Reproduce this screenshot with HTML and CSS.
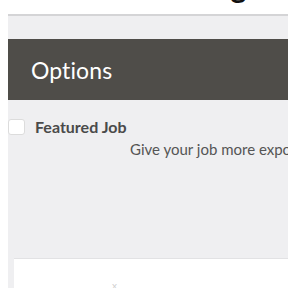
FILE: index.html
```html
<!DOCTYPE html>
<html>
<head>
<meta charset="utf-8">
<link rel="stylesheet" href="styles.css">
</head>
<body>
<div class="topbar"><span class="title">Listing</span></div>
<div class="page">
  <div class="band"><h2 class="band-title">Options</h2></div>
  <div class="options">
    <label class="row">
      <span class="checkbox"></span>
      <span class="label">Featured Job</span>
    </label>
    <p class="desc">Give your job more exposure by featuring it at the top of the listings.</p>
  </div>
  <div class="card"><span class="mark">x</span></div>
</div>
</body>
</html>
```
FILE: styles.css
```css
html, body {
  margin: 0;
  padding: 0;
  background: #ffffff;
  font-family: "Lato", "Noto Sans", sans-serif;
  overflow: hidden;
  height: 288px;
}
.topbar {
  height: 14px;
  overflow: hidden;
}
.title {
  display: block;
  font-size: 30px;
  line-height: 30px;
  margin-top: -29px;
  padding-left: 158px;
  color: #111;
  font-weight: 700;
  white-space: nowrap;
}
.page {
  margin-left: 8px;
  border-top: 2px solid #d4d4d6;
  background: #efeff1;
  padding-top: 23px;
  height: 274px;
  box-sizing: border-box;
  overflow: hidden;
}
.band {
  background: #4f4d49;
  height: 61px;
  display: flex;
  align-items: center;
  padding-left: 23px;
}
.band-title {
  margin: 0;
  font-weight: 400;
  font-size: 23px;
  color: #ffffff;
  letter-spacing: 0.1px;
}
.options {
  padding-top: 17px;
  height: 158px;
  box-sizing: border-box;
}
.row {
  display: flex;
  align-items: center;
  gap: 10px;
}
.checkbox {
  width: 15px;
  height: 14px;
  border: 1px solid #dcdcdc;
  border-radius: 3px;
  background: #fff;
  flex: none;
}
.label {
  font-weight: 700;
  font-size: 16px;
  color: #4a4a4a;
}
.desc {
  margin: 4px 0 0;
  padding-left: 122px;
  font-size: 15px;
  color: #555;
  white-space: nowrap;
}
.card {
  margin-left: 6px;
  background: #ffffff;
  border-top: 1px solid #e2e2e4;
  height: 60px;
  position: relative;
}
.mark {
  position: absolute;
  left: 98px;
  top: 20px;
  font-size: 10px;
  color: #d0d0d0;
}
```
